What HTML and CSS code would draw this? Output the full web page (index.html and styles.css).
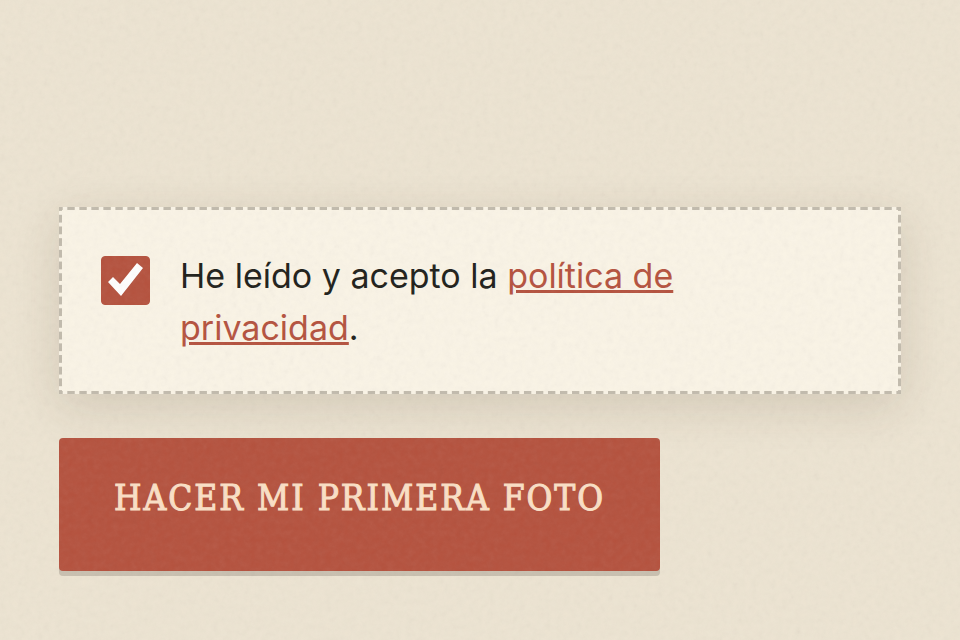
FILE: index.html
```html
<!DOCTYPE html>
<html lang="es">
<head>
  <meta charset="UTF-8" />
  <meta name="viewport" content="width=device-width, initial-scale=1.0"/>
  <title>Hacer mi primera foto</title>
  <link rel="stylesheet" href="styles.css">
</head>
<body>
  <form class="consent-form">
    <div class="consent-card">
      <input type="checkbox" class="consent-check" id="privacy" name="privacy" checked required />
      <label class="consent-label" for="privacy">He leído y acepto la <a href="#privacidad">política de privacidad</a>.</label>
    </div>
    <button type="submit" class="btn-photo">Hacer mi primera foto</button>
  </form>

  <!-- paper grain over the whole page -->
  <svg class="grain" aria-hidden="true">
    <filter id="paper">
      <feTurbulence type="fractalNoise" baseFrequency="0.16" numOctaves="3" stitchTiles="stitch"/>
      <feColorMatrix type="saturate" values="0"/>
    </filter>
    <rect width="100%" height="100%" filter="url(#paper)"/>
  </svg>
</body>
</html>
```

FILE: styles.css
```css
:root {
  --paper: #ede4d2;
  --card: #faf4e6;
  --stitch: #c2bbad;
  --red: #b5523e;
  --ink: #1f1f1a;
}
* {
  box-sizing: border-box;
}
body {
  margin: 0;
  min-height: 100vh;
  background: var(--paper);
  color: var(--ink);
  font-family: Inter, sans-serif;
}
.consent-form {
  display: flex;
  flex-direction: column;
  align-items: flex-start;
  gap: 44px;
  padding: 207px 59px 64px;
}
/* long dashes on all four sides, spaced evenly into the corners */
.consent-card {
  --dash: var(--stitch) 0 30%, transparent 30% 70%, var(--stitch) 70%;
  display: flex;
  align-items: flex-start;
  gap: 30px;
  width: 100%;
  padding: 43px 42px 40px;
  background:
    linear-gradient(90deg, var(--dash)) top left / 12px 3px round no-repeat,
    linear-gradient(90deg, var(--dash)) bottom left / 12px 3px round no-repeat,
    linear-gradient(var(--dash)) top left / 3px 12px no-repeat round,
    linear-gradient(var(--dash)) top right / 3px 12px no-repeat round,
    var(--card);
  box-shadow: 0 12px 44px rgba(60, 45, 20, 0.14);
}
.consent-check {
  appearance: none;
  flex: none;
  width: 49px;
  height: 49px;
  margin: 6px 0 0;
  border-radius: 4px;
  border: 1px solid var(--red);
  background: #fff;
  cursor: pointer;
}
.consent-check:checked {
  background: var(--red) url("data:image/svg+xml,%3Csvg xmlns='http://www.w3.org/2000/svg' viewBox='0 0 49 49'%3E%3Cpath d='M7 26l5-5 7 7L36 7l6 5-22 28z' fill='%23fff'/%3E%3C/svg%3E") center / 49px 49px no-repeat;
}
.consent-label {
  font-size: 34px;
  line-height: 52px;
}
.consent-label a {
  color: var(--red);
  text-decoration: underline;
}
.btn-photo {
  padding: 36px 55px 49px;
  border: none;
  border-radius: 4px;
  background: var(--red);
  box-shadow: 0 5px 0 #c9c0b0;
  color: #fbe0c6;
  font-family: "Special Elite", "DejaVu Serif Condensed", "DejaVu Serif", serif;
  font-size: 35px;
  line-height: 48px;
  letter-spacing: 2px;
  text-transform: uppercase;
  -webkit-text-stroke: 1px #fbe0c6;
  cursor: pointer;
}
.grain {
  position: fixed;
  inset: 0;
  width: 100%;
  height: 100%;
  opacity: 0.08;
  pointer-events: none;
}
```
